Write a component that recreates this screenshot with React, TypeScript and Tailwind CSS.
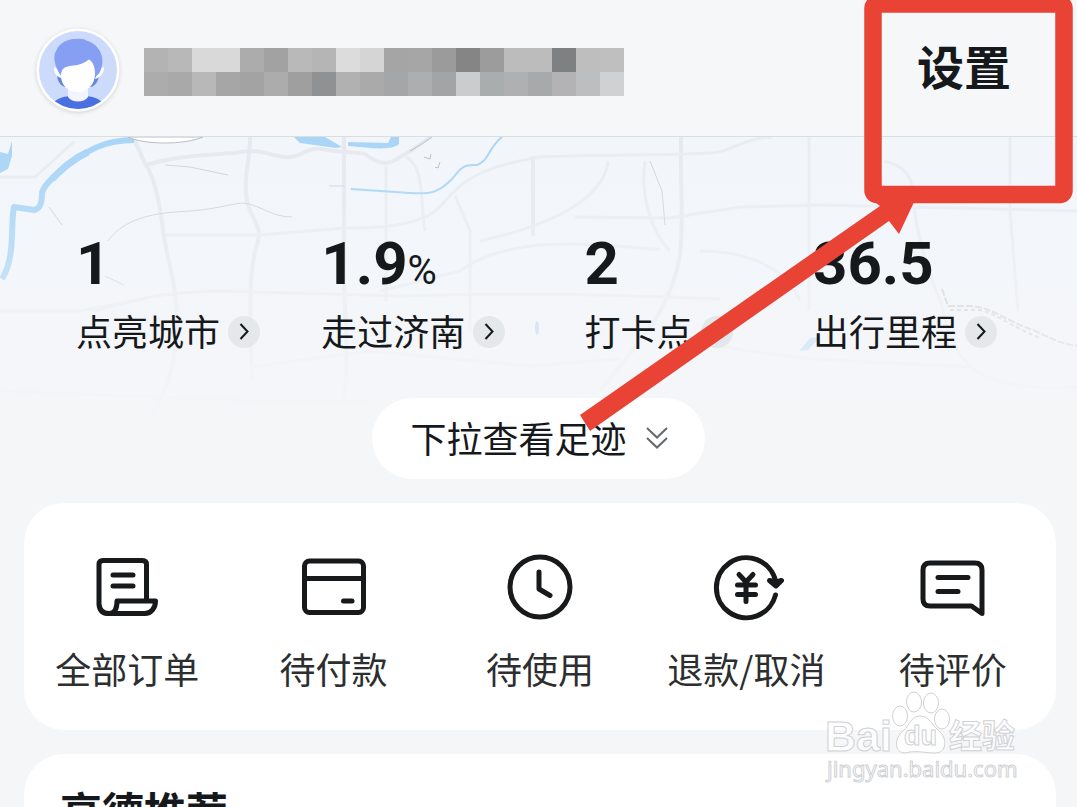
import React from "react";

const mosaicColors = [
  "#b3b3b3", "#b8b8b8", "#d9d9da", "#d9d9da", "#acacac", "#a2a2a3", "#b9b9ba", "#b5b5b6", "#dcdcdd", "#d5d5d6",
  "#a5a5a6", "#a6a6a7", "#9b9b9c", "#858586", "#9c9c9d", "#bcbcbd", "#bcbcbd", "#7f8081", "#bebebf", "#bfbfc0",
  "#acacad", "#a9a9a9", "#b8b8b9", "#a6a6a7", "#a3a3a4", "#acacad", "#9f9fa0", "#909192", "#b1b1b2", "#aaaaab",
  "#a5a6a7", "#adaeaf", "#a3a4a5", "#cbcccd", "#a9adae", "#afb0b1", "#a8a9aa", "#b3b2b4", "#bdbebf", "#d0d1d2",
];

function Avatar() {
  return (
    <svg viewBox="0 0 84 84" className="size-[84px] shrink-0 drop-shadow-sm" role="img" aria-label="头像">
      <defs>
        <clipPath id="face-clip">
          <circle cx="42" cy="42" r="39" />
        </clipPath>
      </defs>
      <circle cx="42" cy="42" r="41.500" fill="#fff" />
      <g clipPath="url(#face-clip)">
        <rect width="84" height="84" fill="#ccdafb" />
        <path d="M21 48C22 54 24 57 29 59L55 59C60 57 62 53 63 48Z" fill="#6585e0" />
        <path d="M18 39C18 45 20 49 26 50L24 42ZM68 39C68 45 65 49 59 51L62 42Z" fill="#fff" />
        <path d="M17 75C22 70 27 69 33 68H51C57 69 62 70 67 75V84H17Z" fill="#4a6fe0" />
        <path d="M32 56H52V69C48 75 36 75 32 69Z" fill="#f2f4fe" />
        <path d="M25 48C18 38 17 28 20 23C25 12 36 10 46 11C49 11 50 13 52 13C65 18 69 31 65 41C64 45 62 47 59 49Z" fill="#879ff2" />
        <path d="M25 48C25 41 28 39 34 38C43 37 47 36 53 31.500C57 34 59 39 59 46C59 56 52 64 42 64C32 64 25 57 25 48Z" fill="#fff" />
      </g>
    </svg>
  );
}

function MapBackdrop() {
  return (
    <svg
      viewBox="0 136 1077 367"
      preserveAspectRatio="xMidYMin slice"
      className="absolute inset-0 -z-10 size-full"
      aria-hidden="true"
    >
      <defs>
        <linearGradient id="map-fade" x1="0" y1="0" x2="0" y2="1">
          <stop offset="0" stopColor="#f5f6f8" stopOpacity="0" />
          <stop offset="0.3" stopColor="#f5f6f8" stopOpacity="0.25" />
          <stop offset="0.8" stopColor="#f5f6f8" stopOpacity="1" />
        </linearGradient>
      </defs>
      <rect y="136" width="1077" height="367" fill="#f2f6fb" />
      <g fill="none" stroke="#e6eaf0" strokeWidth="4">
        <path d="M133 136C140 150 143 160 146 164C156 180 160 205 164 236C170 270 178 290 177 330C174 380 160 400 142 430" />
        <path d="M146 164C170 157 185 155 235 152C260 146 270 155 285 156C300 158 305 146 322 148C340 152 350 150 365 153C380 165 390 164 400 156C412 150 422 142 430 136" />
        <path d="M250 136C250 160 243 175 247 200C252 220 262 225 258 240C248 270 250 310 252 380" />
        <path d="M344 136V280C344 310 350 340 344 400" />
        <path d="M533 155V235M681 136C680 180 684 220 680 255C670 310 640 340 600 390" />
      </g>
      <g fill="none" stroke="#e9edf2" strokeWidth="3">
        <path d="M165 234H260L345 227C400 228 428 218 440 206C460 180 480 166 540 156C610 153 660 155 710 152C730 152 740 138 772 136" />
        <path d="M386 165V300M405 155C425 165 420 200 425 230M455 195L470 230V330" />
        <path d="M608 160C605 190 570 220 480 240M645 160C640 190 650 230 670 250" />
        <path d="M575 216L670 217L740 206L820 204L1077 210M380 290L460 270C520 225 640 250 660 248" />
        <path d="M809 136V310M884 160C905 165 912 175 912 190C918 250 935 285 942 305C955 370 980 390 1077 386" />
        <path d="M1010 136V210L1018 310M700 250C760 250 790 275 800 300" />
        <path d="M95 310C130 300 150 292 220 290L400 295C500 292 590 292 720 298M720 345C800 360 850 360 970 366" />
        <path d="M0 310H80L145 298M250 366L370 350L530 365L620 358" />
        <path d="M0 176H35L75 140M50 425C80 415 110 420 140 430M0 390L260 400H370" />
      </g>
      <g fill="none" stroke="#cfd5dd" strokeWidth="1">
        <path d="M108 240C120 222 145 213 175 211C215 209 225 204 242 202C260 203 270 216 292 216" />
        <path d="M165 164L190 166L228 174M49 206L62 224M105 275L124 284" />
        <path d="M650 160L662 190L665 224M329 185H345" />
      </g>
      <g fill="none" stroke="#b9c0ca" strokeWidth="1">
        <path d="M410 150L420 144L432 136" />
        <path d="M424 156L430 158L431 153M435 166L438 167L440 161" />
      </g>
      <g fill="none" stroke="#ccd2d9" strokeWidth="2">
        <path d="M942 288L948 305L970 305C990 306 1000 316 1025 326C1045 333 1055 342 1077 345" strokeDasharray="7 2" />
        <path d="M950 309L980 309C995 312 1010 325 1040 337" strokeDasharray="4 3" />
      </g>
      <g fill="none" stroke="#a9d5f7">
        <path d="M134 139C102 139 86 151 68 164C55 175 44 183 42 192C42 206 38 208 34 209L14 206C10 225 16 255 2 278" strokeWidth="6" strokeLinejoin="round" />
        <path d="M88 151C72 158 62 168 52 178" strokeWidth="7" />
        <path d="M502 136C488 147 489 160 477 164C461 163 460 169 452 178C437 193 430 193 410 192L351 188" strokeWidth="2" />
      </g>
      <path d="M0 151L8 153L12 140V155L8 168L0 172Z" fill="#a9d5f7" />
      <path d="M294 136H325L342 146L336 147L300 142ZM348 141L388 142L391 136H399V143C392 150 370 147 348 145Z" fill="#a9d5f7" />
      <path d="M799 350L810 337L820 336L808 349Z" fill="#a9d5f7" />
      <ellipse cx="537" cy="327" rx="2" ry="7" fill="#b9cdfa" />
      <path d="M128 136C145 144 184 144 203 136Z" fill="#fff" stroke="#b5bcc5" strokeWidth="1" />
      <rect y="136" width="1077" height="367" fill="url(#map-fade)" />
    </svg>
  );
}

type Stat = { value: string; unit?: string; label: string };

const stats: Stat[] = [
  { value: "1", label: "点亮城市" },
  { value: "1.9", unit: "%", label: "走过济南" },
  { value: "2", label: "打卡点" },
  { value: "36.5", label: "出行里程" },
];

function StatItem({ value, unit, label }: Stat) {
  return (
    <a href="#" className="flex flex-col whitespace-nowrap">
      <span className="h-16 font-[Roboto,sans-serif] text-[60px] leading-[64px] font-bold">
        {value}
        {unit && <span className="text-[40px] font-normal">{unit}</span>}
      </span>
      <span className="mt-4 flex items-center gap-2">
        <span className="pb-1 text-4xl leading-9">{label}</span>
        <span className="flex size-8 items-center justify-center rounded-full bg-[#e4e8eb]">
          <svg viewBox="0 0 32 32" className="size-8" fill="none" stroke="currentColor" strokeWidth="2" aria-hidden="true">
            <path d="M12.500 8L19.500 15.500L12.500 23" />
          </svg>
        </span>
      </span>
    </a>
  );
}

function IconFrame({ children }: { children: React.ReactNode }) {
  return (
    <svg
      viewBox="0 0 76 72"
      className="h-[72px] w-[76px]"
      fill="none"
      stroke="#17191b"
      strokeWidth="5"
      strokeLinecap="round"
      strokeLinejoin="round"
      aria-hidden="true"
    >
      {children}
    </svg>
  );
}

const orders = [
  {
    label: "全部订单",
    icon: (
      <IconFrame>
        <path d="M57.500 49V13.500Q57.500 9.500 53.500 9.500H14Q10 9.500 10 13.500V53Q10.500 62.500 20 62.500H56C62 62.500 66.500 57 66.500 50H28C28 57 26 62.500 20 62.500" />
        <path d="M24 24H44M24 35H44" />
      </IconFrame>
    ),
  },
  {
    label: "待付款",
    icon: (
      <IconFrame>
        <rect x="8.500" y="10" width="59" height="51.500" rx="5" />
        <path d="M8.500 27.500H67.500M47.500 50H56" />
      </IconFrame>
    ),
  },
  {
    label: "待使用",
    icon: (
      <IconFrame>
        <circle cx="38" cy="36" r="30" />
        <path d="M37 21V38L48 44.500" />
      </IconFrame>
    ),
  },
  {
    label: "退款/取消",
    icon: (
      <IconFrame>
        <path d="M67.500 44A30 30 0 1 1 67.500 29.500V33" />
        <path d="M61.500 29.500L68 35L73.500 29.500L68 31Z" />
        <path d="M31 23.500L38 31L45 23.500M29.500 34H47.500M29.500 43.500H47.500M38 31V50.500" />
      </IconFrame>
    ),
  },
  {
    label: "待评价",
    icon: (
      <IconFrame>
        <path d="M15 12H60Q67 12 67 19V62.500L56.500 55H15Q8 55 8 48V19Q8 12 15 12Z" />
        <path d="M23 26.500H53M23 40.500H43" />
      </IconFrame>
    ),
  },
];

function Watermark() {
  return (
    <svg
      viewBox="0 0 200 100"
      className="absolute right-[54px] bottom-[20px] h-[100px] w-[200px]"
      fill="#fff"
      fillOpacity="0.85"
      stroke="#cfd1d4"
      strokeWidth="1"
      aria-label="Baidu 经验 jingyan.baidu.com"
    >
      <text x="2" y="64" fontSize="43" fontWeight="700" fontFamily="Liberation Sans, sans-serif">Bai</text>
      <ellipse cx="77" cy="29" rx="7.500" ry="10" />
      <ellipse cx="91" cy="15" rx="7.500" ry="10" />
      <ellipse cx="108" cy="16" rx="7.500" ry="10" />
      <ellipse cx="119" cy="32" rx="7.500" ry="10" />
      <path d="M97 29C106 29 108 37 115 43C125 51 124 66 112 66C103 66 92 63 82 66C71 66 71 51 80 44C87 38 88 29 97 29Z" />
      <text x="81" y="58" fontSize="27" fontWeight="700" fontFamily="Liberation Sans, sans-serif">du</text>
      <text x="126" y="61" fontSize="33" fontWeight="700" fontFamily="Noto Sans CJK SC, sans-serif">经验</text>
      <text x="4" y="90" fontSize="22" fontFamily="Noto Sans, sans-serif">jingyan.baidu.com</text>
    </svg>
  );
}

export default function App() {
  return (
    <div className="relative flex h-screen flex-col overflow-hidden bg-[#f5f6f8] font-['Noto_Sans_CJK_SC',sans-serif] text-[#16191c]">
      <header className="flex h-[137px] shrink-0 items-center border-b border-[#dadee1] bg-[#f6f7f9] pt-1 pr-[66px] pl-9">
        <Avatar />
        <div className="mt-1 ml-6 grid h-12 w-[480px] grid-cols-20 grid-rows-2" aria-hidden="true">
          {mosaicColors.map((color, index) => (
            <span key={index} style={{ backgroundColor: color }} />
          ))}
        </div>
        <button type="button" className="ml-auto pb-3 text-[47px] leading-none font-bold whitespace-nowrap">
          设置
        </button>
      </header>

      <section className="relative isolate flex h-[366px] shrink-0 flex-col items-center">
        <MapBackdrop />
        <div className="grid w-full grid-cols-[246fr_264fr_229fr_182fr] pt-[95px] pr-20 pl-[76px]">
          {stats.map((stat) => (
            <StatItem key={stat.label} {...stat} />
          ))}
        </div>
        <button
          type="button"
          className="mt-[46px] flex h-[81px] items-center gap-4 rounded-full bg-white pr-[34px] pl-[38px]"
        >
          <span className="pb-1 text-4xl leading-9">下拉查看足迹</span>
          <svg viewBox="0 0 28 28" className="size-7" fill="none" stroke="#66696c" strokeWidth="2" aria-hidden="true">
            <path d="M4 3L14 12.500L24 3M4 13L14 22.500L24 13" />
          </svg>
        </button>
      </section>

      <main className="flex flex-col gap-6 pr-[21px] pl-6">
        <nav className="grid h-[227px] shrink-0 grid-cols-5 rounded-[40px] bg-white pt-12">
          {orders.map(({ label, icon }) => (
            <a key={label} href="#" className="flex flex-col items-center gap-[25px] text-4xl leading-10 whitespace-nowrap text-[#2c2e30]">
              {icon}
              {label}
            </a>
          ))}
        </nav>
        <section className="shrink-0 rounded-t-[40px] bg-white px-9 pt-8 pb-10">
          <h2 className="text-[42px] leading-[48px] font-bold">高德推荐</h2>
        </section>
      </main>

      <Watermark />

      <svg viewBox="0 0 500 440" className="absolute top-0 right-0 h-[440px] w-[500px]" aria-hidden="true">
        <rect x="296" y="4" width="191" height="190.500" rx="4" fill="none" stroke="#e94335" strokeWidth="17.500" />
        <path d="M3 415L303 206L295 200H338L322 234L312 221L13 431Z" fill="#e94335" />
      </svg>
    </div>
  );
}
